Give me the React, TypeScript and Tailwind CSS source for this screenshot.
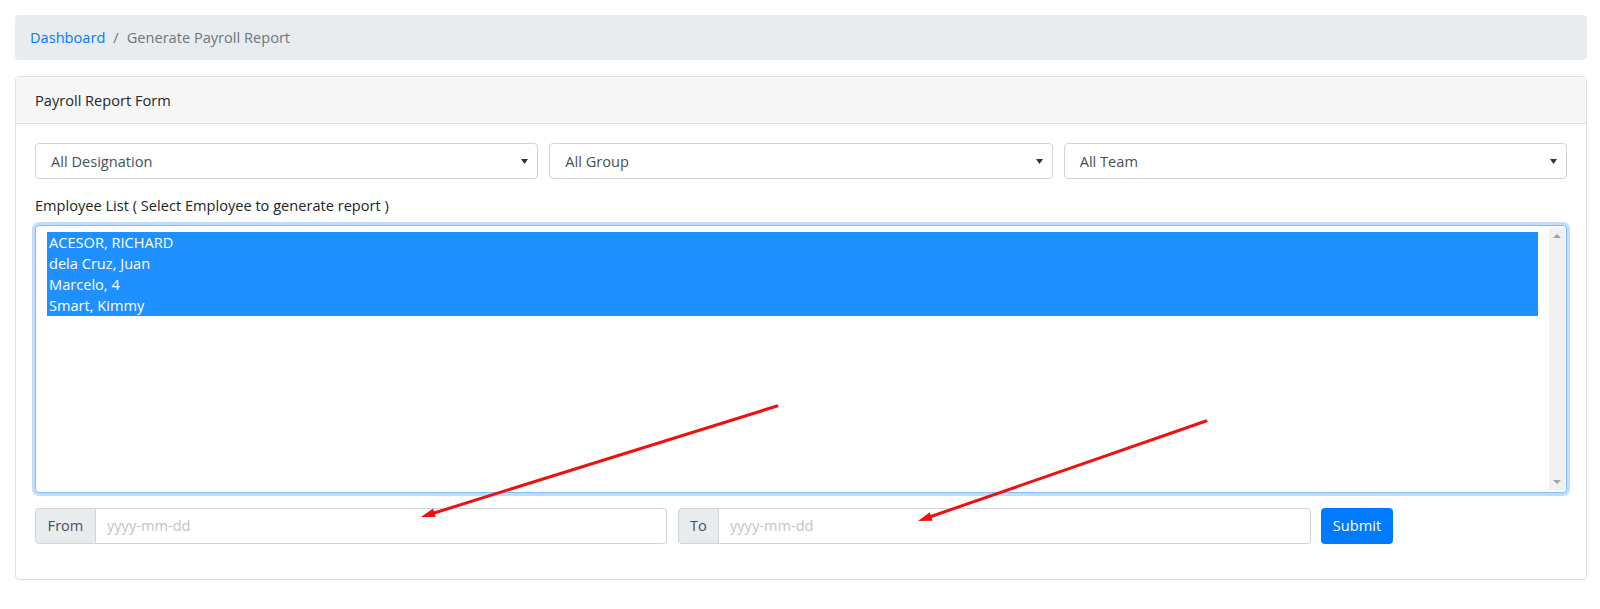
const employees = ['ACESOR, RICHARD', 'dela Cruz, Juan', 'Marcelo, 4', 'Smart, Kimmy'];
const filters = ['All Designation', 'All Group', 'All Team'];

function FakeSelect({ label }: { label: string }) {
  return (
    <div className="flex h-[36px] items-center justify-between rounded-[4px] border border-[#ced4da] bg-white pl-[15px] pr-[9px] text-[#495057]">
      <span>{label}</span>
      <svg width="7" height="5" viewBox="0 0 7 5">
        <path d="M0 0 H7 L3.5 5 Z" fill="#333" />
      </svg>
    </div>
  );
}

function DateGroup({ addon, width, addonWidth }: { addon: string; width: string; addonWidth: string }) {
  return (
    <div className={`flex h-[36px] ${width}`}>
      <div
        className={`flex ${addonWidth} items-center justify-center rounded-l-[4px] border border-[#ced4da] bg-[#e9ecef] text-[#495057]`}
      >
        {addon}
      </div>
      <div className="flex flex-1 items-center rounded-r-[4px] border border-l-0 border-[#ced4da] bg-white px-[11px] text-[#c4c4c4]">
        yyyy-mm-dd
      </div>
    </div>
  );
}

export default function App() {
  return (
    <div
      className="relative min-h-[609px] bg-white pt-[15px] text-[14.6px] leading-[22.5px] text-[#212529]"
      style={{ fontFamily: '"Open Sans", "Noto Sans", sans-serif' }}
    >
      <div className="ml-[15px] mr-[13px]">
        <nav className="mb-[16px] flex h-[45px] items-center rounded-[4px] bg-[#e9ecef] px-[15px]">
          <span className="text-[#007bff]">Dashboard</span>
          <span className="px-[8px] text-[#6c757d]">/</span>
          <span className="text-[#6c757d]">Generate Payroll Report</span>
        </nav>

        <div className="rounded-[4px] border border-[#dfdfdf] bg-white">
          <div className="flex h-[47px] items-center border-b border-[#dfdfdf] bg-[#f7f7f7] px-[19px]">
            Payroll Report Form
          </div>

          <div className="px-[19px] pb-[35px] pt-[19px]">
            <div className="grid grid-cols-3 gap-x-[11px]">
              {filters.map(f => (
                <FakeSelect key={f} label={f} />
              ))}
            </div>

            <div className="mt-[15px] mb-[8px]">Employee List ( Select Employee to generate report )</div>

            <div className="flex h-[268px] rounded-[4px] border border-[#80bdff] bg-white shadow-[0_0_0_3px_rgba(0,123,255,0.25)]">
              <div className="flex-1 px-[11px] pt-[6px]">
                {employees.map(e => (
                  <div key={e} className="flex h-[21px] items-center bg-[#1e90ff] px-[2px] text-white">
                    {e}
                  </div>
                ))}
              </div>
              <div className="my-[2px] mr-[1px] flex w-[16px] flex-col items-center justify-between bg-[#f1f1f1] py-[6px]">
                <svg width="8" height="4" viewBox="0 0 8 4">
                  <path d="M0 4 L4 0 L8 4 Z" fill="#a3a3a3" />
                </svg>
                <svg width="8" height="4" viewBox="0 0 8 4">
                  <path d="M0 0 H8 L4 4 Z" fill="#a3a3a3" />
                </svg>
              </div>
            </div>

            <div className="mt-[15px] flex items-center">
              <DateGroup addon="From" width="w-[632px]" addonWidth="w-[61px]" />
              <div className="w-[11px]" />
              <DateGroup addon="To" width="w-[633px]" addonWidth="w-[41px]" />
              <button
                type="button"
                className="ml-[10px] h-[36px] w-[72px] rounded-[4px] bg-[#007bff] text-white"
              >
                Submit
              </button>
            </div>
          </div>
        </div>
      </div>

      <svg className="pointer-events-none absolute left-0 top-0" width="1600" height="609">
        <line x1="777" y1="406" x2="434" y2="513" stroke="#f01010" strokeWidth="3" strokeLinecap="round" />
        <polygon points="421,517 433,508.5 435.7,517.1" fill="#f01010" />
        <line x1="1206" y1="421" x2="931" y2="516.5" stroke="#f01010" strokeWidth="3" strokeLinecap="round" />
        <polygon points="918,521 929.7,512.2 932.7,520.7" fill="#f01010" />
      </svg>
    </div>
  );
}
